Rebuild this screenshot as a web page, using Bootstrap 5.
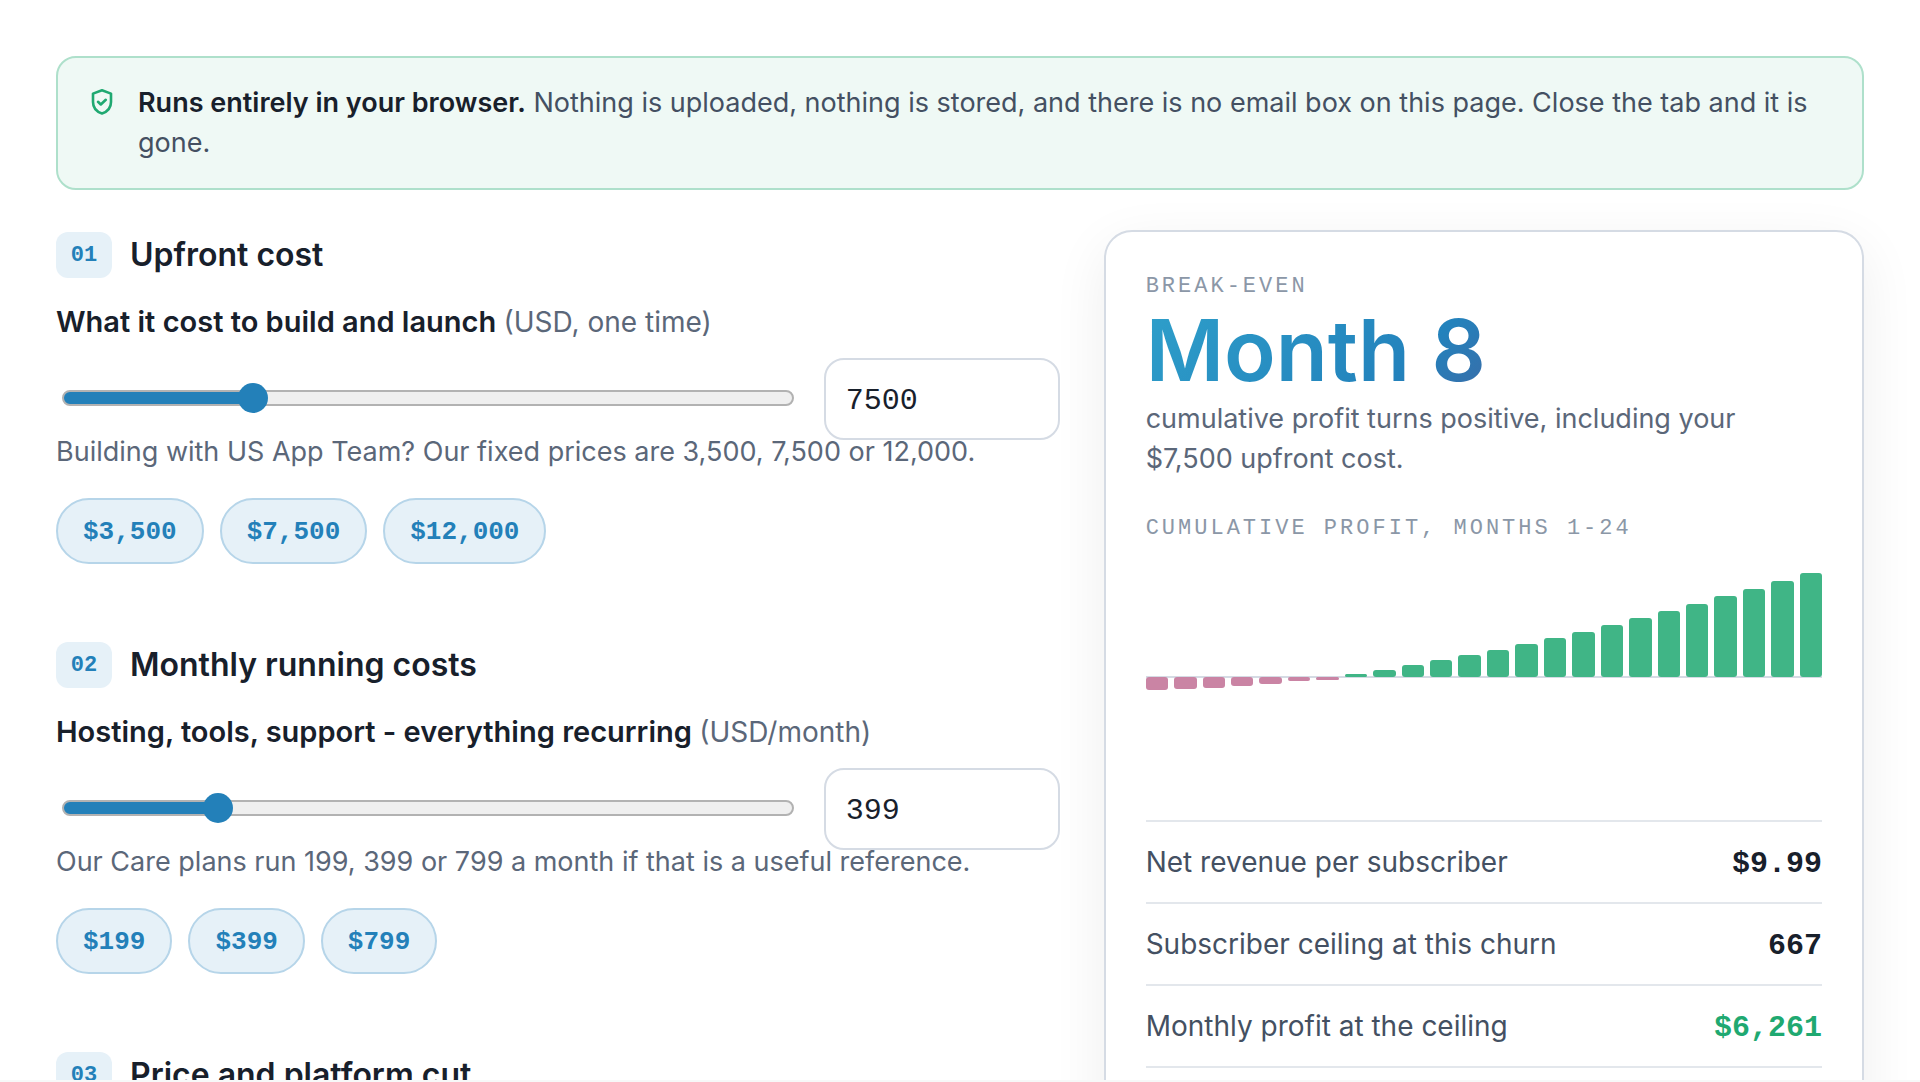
<!DOCTYPE html>
<html lang="en">
<head>
<meta charset="utf-8">
<meta name="viewport" content="width=device-width, initial-scale=1">
<title>Break-even calculator</title>
<link rel="stylesheet" href="https://cdn.jsdelivr.net/npm/bootstrap@5.3.0/dist/css/bootstrap.min.css">
<style>
:root { --ink:#18202b; --body:#445062; --soft:#5b6779; --faint:#8b97a7; --blue:#2380b9; --tint:#e6f1f8; --line:#d5dbe4; --green:#1fa971; --mono:"Liberation Mono",monospace; }
body { font-family:Inter,sans-serif; font-size:28px; line-height:40px; color:var(--body); background:#fff; font-optical-sizing:none; overflow:hidden; height:100vh; }
.page-wrap { padding:56px; }
.privacy-note { font-size:27px; border:2px solid #aee0cb; background:#eff9f5; border-radius:20px; padding:25px 30px; margin-bottom:40px; gap:22px; }
.privacy-note svg { width:28px; height:28px; margin-top:6px; }
.privacy-note strong { font-weight:600; color:var(--ink); }
.calc-grid { display:grid; grid-template-columns:132fr 100fr; gap:44px; align-items:start; }
.calc-form { padding-top:2px; }
.step { margin-bottom:78px; }
.step-num { font:700 22px/44px var(--mono); padding-top:2px; color:var(--blue); background:var(--tint); border-radius:12px; width:56px; text-align:center; }
.step h2 { font-size:32px; line-height:46px; font-weight:600; color:var(--ink); }
.step-head { gap:18px; margin-bottom:24px; }
.field-label { font-size:29px; font-weight:600; color:var(--ink); margin-bottom:16px; display:block; }
.field-label span { font-size:28px; font-weight:400; color:var(--soft); }
.field-row { gap:24px; height:74px; }
.slider { appearance:none; -webkit-appearance:none; height:16px; margin:32px 6px 0; flex:1; min-width:0; border-radius:8px; border:2px solid #b2b2b2; background:linear-gradient(var(--blue),var(--blue)) 0 0 / var(--fill) 100% no-repeat #efefef; background-origin:border-box; outline:0; }
.slider::-webkit-slider-thumb { -webkit-appearance:none; width:30px; height:30px; border-radius:50%; background:var(--blue); }
.slider::-moz-range-thumb { width:30px; height:30px; border:0; border-radius:50%; background:var(--blue); }
.amount { width:236px; height:82px; flex:none; font:400 30px/40px var(--mono); color:var(--ink); border:2px solid var(--line); border-radius:20px; padding:4px 20px 0; background:#fff; }
.hint { font-size:27px; color:var(--soft); margin:0 0 26px; }
.chip { font:700 26px/34px var(--mono); color:var(--blue); background:var(--tint); border:2px solid #b6d5e9; border-radius:33px; padding:15px 25px 13px; }
.result { border:2px solid var(--line); border-radius:28px; padding:35px 40px 40px; background:#fff; box-shadow:0 16px 56px rgba(0,0,0,.07); }
.eyebrow { font:400 22px/40px var(--mono); letter-spacing:3px; text-transform:uppercase; color:var(--faint); }
.headline { font-size:85px; line-height:88px; font-weight:600; display:inline-block; margin:0; color:transparent; background:linear-gradient(135deg,#2e9fca,#2382bc 75%,#3a6ca8); -webkit-background-clip:text; background-clip:text; }
.result-copy { font-size:27px; color:var(--soft); margin:4px 0 30px; }
.chart { position:relative; height:208px; gap:6px; margin:24px 0 39px; }
.chart::before { content:""; position:absolute; left:0; right:0; top:50%; margin-top:-1px; height:2px; background:var(--line); }
.bar-slot { flex:1; height:50%; position:relative; display:flex; }
.bar-slot i { width:100%; border-radius:3px; }
.bar-gain { align-items:flex-end; }
.bar-gain i { background:#40b586; }
.bar-loss { align-self:flex-end; align-items:flex-start; }
.bar-loss i { background:#ca84a4; }
.stat { border-top:2px solid #e3e7ec; padding:20px 0 18px; margin:0; }
.stat dd { font:700 30px/40px var(--mono); color:var(--ink); margin:0; }
.stat dt { font-weight:400; }
.stat dd.gain { color:var(--green); }
.dock { height:2px; background:#f7f8f8; }
</style>
<script src="https://cdn.jsdelivr.net/npm/bootstrap@5.3.0/dist/js/bootstrap.bundle.min.js"></script>
</head>
<body>
<main class="page-wrap">
  <div class="privacy-note d-flex align-items-start">
    <svg class="flex-shrink-0" viewBox="0 0 28 28" fill="none" stroke="#1fa971" stroke-width="2.600" stroke-linecap="round" stroke-linejoin="round" aria-hidden="true"><path d="M14 1.300 23 4.600V13c0 5.600-3.800 9.800-9 11.500C8.800 22.800 5 18.600 5 13V4.600z"/><path d="m10 12.800 2.800 2.700 5-4.700"/></svg>
    <div><strong>Runs entirely in your browser.</strong> Nothing is uploaded, nothing is stored, and there is no email box on this page. Close the tab and it is gone.</div>
  </div>

  <div class="calc-grid">
    <form class="calc-form">
      <section class="step">
        <div class="step-head d-flex align-items-center"><span class="step-num">01</span><h2 class="mb-0">Upfront cost</h2></div>
        <label class="field-label" for="upfront">What it cost to build and launch <span>(USD, one time)</span></label>
        <div class="field-row d-flex align-items-start">
          <input class="slider" type="range" min="0" max="30000" step="100" value="7500" aria-label="Upfront cost" style="--fill:26%">
          <input class="amount" id="upfront" type="text" inputmode="numeric" value="7500">
        </div>
        <p class="hint">Building with US App Team? Our fixed prices are 3,500, 7,500 or 12,000.</p>
        <div class="d-flex gap-3"><button type="button" class="chip">$3,500</button><button type="button" class="chip">$7,500</button><button type="button" class="chip">$12,000</button></div>
      </section>
      <section class="step">
        <div class="step-head d-flex align-items-center"><span class="step-num">02</span><h2 class="mb-0">Monthly running costs</h2></div>
        <label class="field-label" for="monthly">Hosting, tools, support - everything recurring <span>(USD/month)</span></label>
        <div class="field-row d-flex align-items-start">
          <input class="slider" type="range" min="0" max="2000" step="1" value="399" aria-label="Monthly running costs" style="--fill:21%">
          <input class="amount" id="monthly" type="text" inputmode="numeric" value="399">
        </div>
        <p class="hint">Our Care plans run 199, 399 or 799 a month if that is a useful reference.</p>
        <div class="d-flex gap-3"><button type="button" class="chip">$199</button><button type="button" class="chip">$399</button><button type="button" class="chip">$799</button></div>
      </section>
      <section class="step">
        <div class="step-head d-flex align-items-center"><span class="step-num">03</span><h2 class="mb-0">Price and platform cut</h2></div>
      </section>
    </form>

    <aside class="result">
      <div class="eyebrow">Break-even</div>
      <h1 class="headline">Month 8</h1>
      <p class="result-copy">cumulative profit turns positive, including your $7,500 upfront cost.</p>
      <div class="eyebrow">Cumulative profit, months 1-24</div>
      <div class="chart d-flex" role="img" aria-label="Cumulative profit by month">
        <div class="bar-slot bar-loss"><i style="height:13px"></i></div>
        <div class="bar-slot bar-loss"><i style="height:12px"></i></div>
        <div class="bar-slot bar-loss"><i style="height:11px"></i></div>
        <div class="bar-slot bar-loss"><i style="height:9px"></i></div>
        <div class="bar-slot bar-loss"><i style="height:7px"></i></div>
        <div class="bar-slot bar-loss"><i style="height:4px"></i></div>
        <div class="bar-slot bar-loss"><i style="height:3px"></i></div>
        <div class="bar-slot bar-gain"><i style="height:3px"></i></div>
        <div class="bar-slot bar-gain"><i style="height:7px"></i></div>
        <div class="bar-slot bar-gain"><i style="height:12px"></i></div>
        <div class="bar-slot bar-gain"><i style="height:17px"></i></div>
        <div class="bar-slot bar-gain"><i style="height:22px"></i></div>
        <div class="bar-slot bar-gain"><i style="height:27px"></i></div>
        <div class="bar-slot bar-gain"><i style="height:33px"></i></div>
        <div class="bar-slot bar-gain"><i style="height:39px"></i></div>
        <div class="bar-slot bar-gain"><i style="height:45px"></i></div>
        <div class="bar-slot bar-gain"><i style="height:52px"></i></div>
        <div class="bar-slot bar-gain"><i style="height:59px"></i></div>
        <div class="bar-slot bar-gain"><i style="height:66px"></i></div>
        <div class="bar-slot bar-gain"><i style="height:73px"></i></div>
        <div class="bar-slot bar-gain"><i style="height:81px"></i></div>
        <div class="bar-slot bar-gain"><i style="height:88px"></i></div>
        <div class="bar-slot bar-gain"><i style="height:96px"></i></div>
        <div class="bar-slot bar-gain"><i style="height:104px"></i></div>
      </div>
      <dl class="stat d-flex justify-content-between align-items-baseline"><dt>Net revenue per subscriber</dt><dd>$9.99</dd></dl>
      <dl class="stat d-flex justify-content-between align-items-baseline"><dt>Subscriber ceiling at this churn</dt><dd>667</dd></dl>
      <dl class="stat d-flex justify-content-between align-items-baseline"><dt>Monthly profit at the ceiling</dt><dd class="gain">$6,261</dd></dl>
      <div class="stat"></div>
    </aside>
  </div>
</main>
<div class="dock fixed-bottom"></div>
</body>
</html>
